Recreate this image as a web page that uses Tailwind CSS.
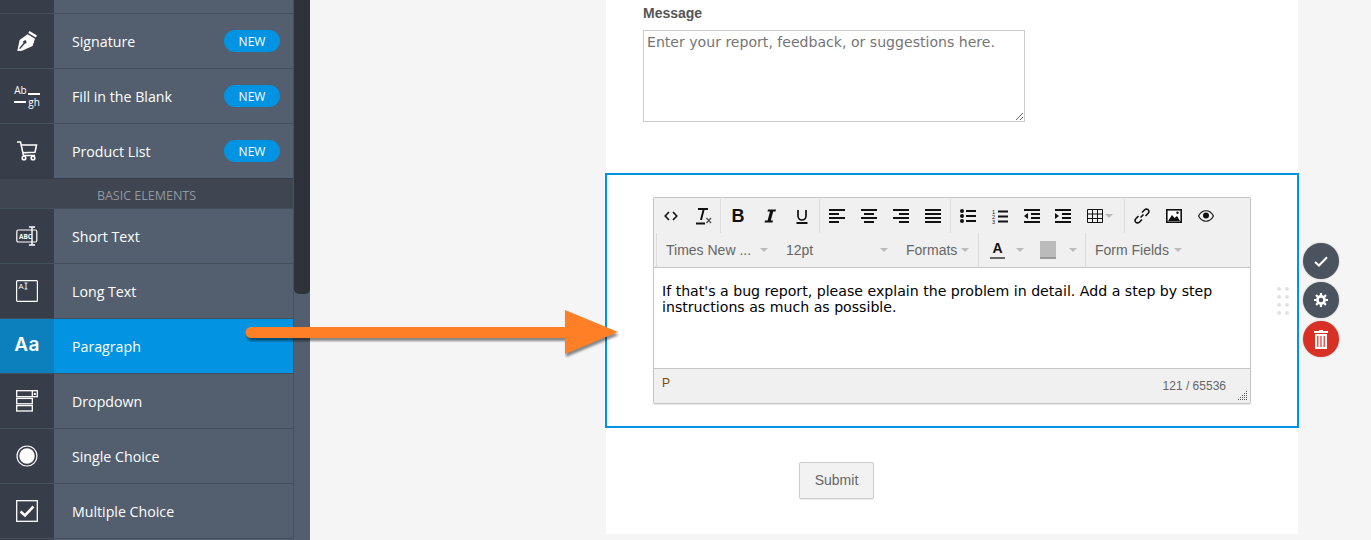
<!DOCTYPE html>
<html><head><meta charset="utf-8"><script src="https://cdn.jsdelivr.net/npm/@tailwindcss/browser@4"></script></head>
<body class="m-0 overflow-hidden">
<div class="relative flex h-[540px] w-[1371px] overflow-hidden bg-[#f5f5f5] font-['Liberation_Sans',sans-serif]">
  <!-- Sidebar -->
  <aside class="flex w-[293px] shrink-0 flex-col bg-[#535f6e] font-['Open_Sans',sans-serif] text-[14.2px] text-white">
    <div class="flex h-[14px] border-b border-[#444f5c]"><div class="w-[54px] bg-[#373e4a]"></div></div>
    <div class="flex h-[55px] items-center border-b border-[#444f5c]">
      <div class="flex h-full w-[54px] items-center justify-center bg-[#373e4a]"><svg width="22" height="22" viewBox="0 0 22 22" fill="#fff"><path d="M13.5 1 L21 5.5 L19.8 7.6 L12.3 3.1 Z"/><path fill-rule="evenodd" d="M11.6 4.3 L19 8.8 L16.6 16 L6 20.8 L1.3 21 L3.6 10 Z M4.2 19 L8.8 13.8 A1.7 1.7 0 1 0 7.4 13 L3.1 18.3 Z"/></svg></div>
      <span class="ml-[18px] pt-[2px]">Signature</span><span class="ml-auto mr-[13px] flex h-[22px] w-[56px] items-center justify-center rounded-full bg-[#0293e2] pt-[2px] text-[12px]">NEW</span>
    </div>
    <div class="flex h-[55px] items-center border-b border-[#444f5c]">
      <div class="flex h-full w-[54px] flex-col items-center justify-center bg-[#373e4a] text-[10px] leading-[12px]"><div class="flex items-end"><span>Ab</span><span class="mb-[1px] ml-[1px] h-[2px] w-[12px] bg-white"></span></div><div class="flex items-center"><span class="mr-[2px] h-[2px] w-[12px] bg-white"></span><span>gh</span></div></div>
      <span class="ml-[18px] pt-[2px]">Fill in the Blank</span><span class="ml-auto mr-[13px] flex h-[22px] w-[56px] items-center justify-center rounded-full bg-[#0293e2] pt-[2px] text-[12px]">NEW</span>
    </div>
    <div class="flex h-[55px] items-center border-b border-[#373e4a]">
      <div class="flex h-full w-[54px] items-center justify-center bg-[#373e4a]"><svg width="22" height="20" viewBox="0 0 22 20" fill="none" stroke="#fff" stroke-width="1.6"><path d="M1 1 H4.5 L7.5 14.5 H19"/><path d="M5.3 4 H20.5 L19 11.3 L6.7 11.8"/><circle cx="8" cy="17" r="1.8"/><circle cx="17" cy="17" r="1.8"/></svg></div>
      <span class="ml-[18px] pt-[2px]">Product List</span><span class="ml-auto mr-[13px] flex h-[22px] w-[56px] items-center justify-center rounded-full bg-[#0293e2] pt-[2px] text-[12px]">NEW</span>
    </div>
    <div class="flex h-[30px] items-center justify-center border-b border-[#444f5c] bg-[#3f4551] pt-[5px] text-[12.5px] text-[#9298a1]">BASIC ELEMENTS</div>
    <div class="flex h-[55px] items-center border-b border-[#444f5c]">
      <div class="flex h-full w-[54px] items-center justify-center bg-[#373e4a]"><svg width="22" height="20" viewBox="0 0 22 20" fill="none" stroke="#fff" stroke-width="1.2"><rect x="0.8" y="4" width="20" height="12" rx="1.5"/><path d="M13 1 H19 M13 19 H19 M16 1 V19" stroke-width="1.4"/><text x="3" y="12.5" font-size="6.5" font-weight="700" fill="#fff" stroke="none" font-family="Open Sans">ABC</text></svg></div>
      <span class="ml-[18px] pt-[2px]">Short Text</span>
    </div>
    <div class="flex h-[55px] items-center border-b border-[#444f5c]">
      <div class="flex h-full w-[54px] items-center justify-center bg-[#373e4a]"><svg width="22" height="22" viewBox="0 0 22 22" fill="none" stroke="#fff" stroke-width="1.2"><rect x="0.6" y="0.6" width="20.8" height="20.8" rx="1"/><text x="2.5" y="9" font-size="8" fill="#fff" stroke="none" font-family="Open Sans">A</text><path d="M8.5 3 H11.5 M10 3 V9 M8.5 9 H11.5" stroke-width="0.9"/></svg></div>
      <span class="ml-[18px] pt-[2px]">Long Text</span>
    </div>
    <div class="flex h-[55px] items-center border-b border-[#444f5c] bg-[#0293e2]">
      <div class="flex h-full w-[54px] items-center justify-center bg-[#0c7fbd] pb-[2px] font-['Inter',sans-serif] text-[19px] font-semibold tracking-[0.5px]">Aa</div>
      <span class="ml-[18px] pt-[2px]">Paragraph</span>
    </div>
    <div class="flex h-[55px] items-center border-b border-[#444f5c]">
      <div class="flex h-full w-[54px] items-center justify-center bg-[#373e4a]"><svg width="22" height="22" viewBox="0 0 22 22" fill="none" stroke="#fff" stroke-width="1.3"><rect x="0.7" y="0.7" width="20.6" height="6"/><rect x="0.7" y="8.4" width="15.6" height="5.4"/><rect x="0.7" y="15.6" width="15.6" height="5.4"/><path d="M16.3 1 V6.5"/><rect x="17.8" y="3" width="2" height="2" fill="#fff" stroke="none"/></svg></div>
      <span class="ml-[18px] pt-[2px]">Dropdown</span>
    </div>
    <div class="flex h-[55px] items-center border-b border-[#444f5c]">
      <div class="flex h-full w-[54px] items-center justify-center bg-[#373e4a]"><svg width="22" height="22" viewBox="0 0 22 22"><circle cx="11" cy="11" r="10" fill="none" stroke="#fff" stroke-width="1.2"/><circle cx="11" cy="11" r="7.7" fill="#fff"/></svg></div>
      <span class="ml-[18px] pt-[2px]">Single Choice</span>
    </div>
    <div class="flex h-[55px] items-center border-b border-[#444f5c]">
      <div class="flex h-full w-[54px] items-center justify-center bg-[#373e4a]"><svg width="22" height="22" viewBox="0 0 22 22" fill="none" stroke="#fff"><rect x="0.7" y="0.7" width="20.6" height="20.6" stroke-width="1.3"/><path d="M4.5 11.5 L9 15.5 L17.5 6.5" stroke-width="2.6"/></svg></div>
      <span class="ml-[18px] pt-[2px]">Multiple Choice</span>
    </div>
    <div class="flex flex-1"><div class="w-[54px] bg-[#373e4a]"></div></div>
  </aside>
  <!-- Scroll rail -->
  <div class="w-[17px] shrink-0 border-l border-[#48525f] bg-[#535f6e]"><div class="h-[294px] rounded-b-[5px] bg-[#2e333b]"></div></div>
  <!-- Form area -->
  <main class="ml-[296px] h-[534px] w-[692px] shrink-0 bg-white">
    <div class="mt-[5px] ml-[37px] text-[14px] font-bold leading-[16px] text-[#555]">Message</div>
    <textarea class="mt-[9px] ml-[37px] block h-[92px] w-[382px] border border-[#ccc] px-[3px] py-[2px] font-['DejaVu_Sans',sans-serif] text-[14.08px] leading-[18px] placeholder:text-[#757575]" placeholder="Enter your report, feedback, or suggestions here."></textarea>
    <section class="-ml-[1px] mt-[51px] h-[255px] w-[694px] border-2 border-[#0293e2] pl-[46px] pt-[22px]">
      <div class="h-[207px] w-[598px] rounded-[2px] border border-[#c5c5c5] bg-white shadow-[0_1px_1px_rgba(0,0,0,0.1)]">
        <div class="h-[70px] border-b border-[#c5c5c5] bg-[#f0f0f0]">
          <div class="flex h-[35px] pl-[1px] pt-[1px]">
            <div class="flex w-[66px] border-r border-[#dcdcdc]">
              <div class="flex w-8 items-center justify-center"><svg width="14" height="10" viewBox="0 0 14 10" fill="none" stroke="#111" stroke-width="1.6"><path d="M5 1 L1.2 5 L5 9 M9 1 L12.8 5 L9 9"/></svg></div>
              <div class="flex w-8 items-center justify-center"><svg width="17" height="18" viewBox="0 0 17 18"><path d="M3 1 H13 V3 H9.500 L7 13 H5 L7.500 3 H3 Z M1 15.500 H10 V17.500 H1 Z" fill="#111"/><path d="M11.500 11 L16 16 M16 11 L11.500 16" stroke="#555" stroke-width="1.400"/></svg></div>
            </div>
            <div class="flex w-[99px] border-r border-[#dcdcdc] pl-[1px]">
              <div class="flex w-8 items-center justify-center text-[18px] font-bold leading-none text-[#111]">B</div>
              <div class="flex w-8 items-center justify-center"><svg width="12" height="14" viewBox="0 0 12 14"><path d="M4 0.5 H12 L11.5 2.4 H9.2 L6.8 11.6 H9 L8.5 13.5 H0.5 L1 11.6 H3.6 L6 2.4 H3.5 Z" fill="#111"/></svg></div>
              <div class="flex w-8 items-center justify-center"><svg width="12" height="15" viewBox="0 0 12 15" fill="none" stroke="#111"><path d="M2 1 V7 A4 4 0 0 0 10 7 V1" stroke-width="1.7"/><path d="M0.5 14 H11.5" stroke-width="2"/></svg></div>
            </div>
            <div class="flex w-[131px] border-r border-[#dcdcdc] pl-[1px]">
              <div class="flex w-8 items-center justify-center"><svg width="16" height="14" viewBox="0 0 16 14" fill="#111"><path d="M0 0h16v2H0zM0 4h10v2H0zM0 8h16v2H0zM0 12h10v2H0z"/></svg></div>
              <div class="flex w-8 items-center justify-center"><svg width="16" height="14" viewBox="0 0 16 14" fill="#111"><path d="M0 0h16v2H0zM3 4h10v2H3zM0 8h16v2H0zM3 12h10v2H3z"/></svg></div>
              <div class="flex w-8 items-center justify-center"><svg width="16" height="14" viewBox="0 0 16 14" fill="#111"><path d="M0 0h16v2H0zM6 4h10v2H6zM0 8h16v2H0zM6 12h10v2H6z"/></svg></div>
              <div class="flex w-8 items-center justify-center"><svg width="16" height="14" viewBox="0 0 16 14" fill="#111"><path d="M0 0h16v2H0zM0 4h16v2H0zM0 8h16v2H0zM0 12h16v2H0z"/></svg></div>
            </div>
            <div class="flex w-[174px] border-r border-[#dcdcdc] pl-[1px]">
              <div class="flex w-8 items-center justify-center"><svg width="16" height="14" viewBox="0 0 16 14" fill="#111"><circle cx="2" cy="2" r="2"/><circle cx="2" cy="7" r="2"/><circle cx="2" cy="12" r="2"/><path d="M6 1h10v2H6zM6 6h10v2H6zM6 11h10v2H6z"/></svg></div>
              <div class="flex w-8 items-center justify-center"><svg width="16" height="15" viewBox="0 0 16 15" fill="#111"><path d="M6 1.5h10v2H6zM6 6.5h10v2H6zM6 11.5h10v2H6z"/><text x="0" y="5" font-size="5.5" font-family="Liberation Sans">1</text><text x="0" y="10" font-size="5.5" font-family="Liberation Sans">2</text><text x="0" y="15" font-size="5.5" font-family="Liberation Sans">3</text></svg></div>
              <div class="flex w-8 items-center justify-center"><svg width="16" height="14" viewBox="0 0 16 14" fill="#111"><path d="M0 0h16v2H0zM7 4h9v2H7zM7 8h9v2H7zM0 12h16v2H0zM4 4v6L0 7z"/></svg></div>
              <div class="flex w-8 items-center justify-center"><svg width="16" height="14" viewBox="0 0 16 14" fill="#111"><path d="M0 0h16v2H0zM7 4h9v2H7zM7 8h9v2H7zM0 12h16v2H0zM0 4v6L4 7z"/></svg></div>
              <div class="flex w-[45px] items-center pl-[8px]"><svg width="16" height="14" viewBox="0 0 16 14" fill="none" stroke="#111"><path d="M.5.5h15v13H.5zM.5 5h15M.5 9.500h15M5.500.5v13M10.500.5v13"/></svg><span class="ml-[2px] h-0 w-0 border-x-[4px] border-t-[4px] border-x-transparent border-t-[#bbb]"></span></div>
            </div>
            <div class="flex pl-[1px]">
              <div class="flex w-8 items-center justify-center"><svg width="16" height="16" viewBox="0 0 16 16" fill="none" stroke="#111" stroke-width="1.6"><path d="M6.500 9.500 L9.500 6.500"/><path d="M8 4.500 L10.700 1.800 A2.400 2.400 0 0 1 14.200 5.300 L11.500 8"/><path d="M8 11.500 L5.300 14.200 A2.400 2.400 0 0 1 1.800 10.700 L4.500 8"/></svg></div>
              <div class="flex w-8 items-center justify-center"><svg width="16" height="14" viewBox="0 0 16 14"><rect x=".8" y=".8" width="14.400" height="12.400" fill="#fff" stroke="#111" stroke-width="1.600"/><path d="M2 12 L6 6 L8.500 9 L11 7 L14 12 Z" fill="#111"/><circle cx="11.500" cy="3.800" r="1.200" fill="#111"/></svg></div>
              <div class="flex w-8 items-center justify-center"><svg width="16" height="12" viewBox="0 0 16 12"><path d="M.5 6 C3 1.500 5.500.8 8 .8 S13 1.500 15.500 6 C13 10.500 10.500 11.200 8 11.200 S3 10.500.5 6 Z" fill="none" stroke="#111" stroke-width="1.100"/><circle cx="8" cy="5.500" r="3" fill="#111"/></svg></div>
            </div>
          </div>
          <div class="flex h-[34px] items-center pl-[2px] text-[14px] text-[#666]">
            <div class="flex h-full w-[323px] items-center border-l border-[#dcdcdc]">
              <span class="ml-[9px] w-[94px] whitespace-nowrap">Times New ...</span><span class="h-0 w-0 border-x-[4px] border-t-[4px] border-x-transparent border-t-[#bbb]"></span>
              <span class="ml-[18px] w-[94px]">12pt</span><span class="h-0 w-0 border-x-[4px] border-t-[4px] border-x-transparent border-t-[#bbb]"></span>
              <span class="ml-[18px] w-[55px]">Formats</span><span class="h-0 w-0 border-x-[4px] border-t-[4px] border-x-transparent border-t-[#bbb]"></span>
              <span class="ml-auto h-full border-r border-[#dcdcdc]"></span>
            </div>
            <div class="flex h-full w-[107px] items-center border-r border-[#dcdcdc]">
              <span class="ml-[11px] flex h-[18px] w-[15px] flex-col items-center border-b-[2px] border-[#666] text-[14px] font-bold leading-[15px] text-[#111]">A</span><span class="ml-[11px] h-0 w-0 border-x-[4px] border-t-[4px] border-x-transparent border-t-[#bbb]"></span>
              <span class="ml-[16px] h-[18px] w-[16px] border-b-[2px] border-[#999] bg-[#bbb]"></span><span class="ml-[13px] h-0 w-0 border-x-[4px] border-t-[4px] border-x-transparent border-t-[#bbb]"></span>
            </div>
            <span class="ml-[9px]">Form Fields</span><span class="ml-[5px] h-0 w-0 border-x-[4px] border-t-[4px] border-x-transparent border-t-[#bbb]"></span>
          </div>
        </div>
        <div class="h-[101px] border-b border-[#c5c5c5] px-[8px] pt-[15px] font-['DejaVu_Sans',sans-serif] text-[14.13px] leading-[16px] text-black">If that's a bug report, please explain the problem in detail. Add a step by step<br>instructions as much as possible.</div>
        <div class="relative flex h-[34px] items-start justify-between bg-[#f0f0f0] pl-[8px] pr-[24px] pt-[6px] text-[12px] leading-[16px]">
          <span class="text-[#7a4a00]">P</span><span class="mt-[3px] text-[#666]">121 / 65536</span>
          <svg class="absolute bottom-[2px] right-[2px]" width="10" height="10" viewBox="0 0 10 10" fill="#555"><path d="M8 0h1v1H8zM6 2h1v1H6zM8 2h1v1H8zM4 4h1v1H4zM6 4h1v1H6zM8 4h1v1H8zM2 6h1v1H2zM4 6h1v1H4zM6 6h1v1H6zM8 6h1v1H8zM0 8h1v1H0zM2 8h1v1H2zM4 8h1v1H4zM6 8h1v1H6zM8 8h1v1H8z"/></svg>
        </div>
      </div>
    </section>
    <button class="ml-[193px] mt-[34px] block h-[37px] w-[75px] rounded-[2px] border border-[#ccc] bg-[#f2f2f2] text-[14px] text-[#666] shadow-[0_1px_1px_rgba(0,0,0,0.08)]">Submit</button>
  </main>
  <!-- Drag dots -->
  <div class="absolute left-[1277px] top-[287px] grid grid-cols-2 gap-x-[4px] gap-y-[4px]">
    <span class="size-[4px] rounded-full bg-[#e3e3e3]"></span><span class="size-[4px] rounded-full bg-[#e3e3e3]"></span><span class="size-[4px] rounded-full bg-[#e3e3e3]"></span><span class="size-[4px] rounded-full bg-[#e3e3e3]"></span><span class="size-[4px] rounded-full bg-[#e3e3e3]"></span><span class="size-[4px] rounded-full bg-[#e3e3e3]"></span><span class="size-[4px] rounded-full bg-[#e3e3e3]"></span><span class="size-[4px] rounded-full bg-[#e3e3e3]"></span>
  </div>
  <!-- Floating actions -->
  <div class="absolute left-[1303px] top-[243px] flex flex-col gap-[3px]">
    <div class="flex size-[36px] items-center justify-center rounded-full bg-[#4a535e] shadow-[0_0_2px_rgba(0,0,0,0.25)]"><svg width="14" height="11" viewBox="0 0 14 11" fill="none" stroke="#fff" stroke-width="2"><path d="M1 6 L5 9.500 L13 1.200"/></svg></div>
    <div class="flex size-[36px] items-center justify-center rounded-full bg-[#4a535e] shadow-[0_0_2px_rgba(0,0,0,0.25)]"><svg width="14" height="14" viewBox="0 0 14 14"><circle cx="7" cy="7" r="3.600" fill="none" stroke="#fff" stroke-width="2.600"/><path d="M7 0v14M0 7h14M2 2l10 10M12 2L2 12" stroke="#fff" stroke-width="2.200" stroke-dasharray="2.400 9.200 2.400"/></svg></div>
    <div class="flex size-[36px] items-center justify-center rounded-full bg-[#d93025] shadow-[0_0_2px_rgba(0,0,0,0.25)]"><svg width="14" height="19" viewBox="0 0 14 19" fill="#fff"><path d="M5 0h4v1h5v2H0V1h5zM1 4h12v15H1zM3.200 6v11h1.200V6zM6.400 6v11h1.200V6zM9.600 6v11h1.200V6z" fill-rule="evenodd"/></svg></div>
  </div>
  <!-- Annotation arrow -->
  <svg class="absolute left-[240px] top-[305px] [filter:drop-shadow(1px_3px_1px_rgba(0,0,0,0.45))]" width="390" height="60" viewBox="0 0 390 60">
    <path d="M11 22 H325 V5 L378 27 L325 49 V33 H11 A5.500 5.500 0 0 1 11 22 Z" fill="#ff7f27"/>
  </svg>
</div>
</body></html>
